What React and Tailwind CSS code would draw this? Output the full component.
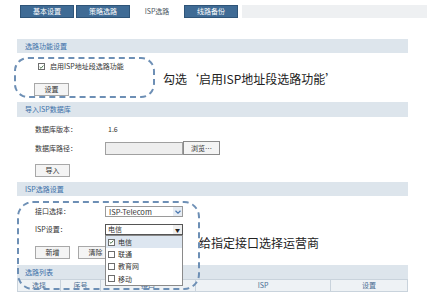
import { useState } from "react";

const font = "font-['Noto_Sans_CJK_SC','Noto_Sans',sans-serif]";

const Tab = ({ label, active }) =>
  active ? (
    <div className="w-[50px] h-[13px] flex items-center justify-center text-[7px] text-[#4a5560]">
      {label}
    </div>
  ) : (
    <div className="w-[54px] h-[13px] flex items-center justify-center text-[7px] text-white bg-[#3f6b95] border border-[#2e5478]">
      {label}
    </div>
  );

const SectionHeader = ({ title, className = "" }) => (
  <div
    className={`h-[14px] w-[391px] bg-[#dde5ec] flex items-center pl-[8px] text-[7px] text-[#3a6fa8] ${className}`}
  >
    {title}
  </div>
);

const Btn = ({ label, className = "" }) => (
  <div
    className={`w-[35px] h-[13px] flex items-center justify-center text-[7px] text-[#333] bg-[#f4f4f4] border border-[#a8a8a8] ${className}`}
  >
    {label}
  </div>
);

const Box = ({ checked }) => (
  <div className="w-[7px] h-[7px] border border-[#6d6d6d] bg-white flex items-center justify-center">
    {checked && (
      <svg width="6" height="6" viewBox="0 0 6 6">
        <path d="M0.8 3 L2.4 4.6 L5.3 1.2" stroke="#2c5d2c" strokeWidth="1" fill="none" />
      </svg>
    )}
  </div>
);

const App = () => {
  const [items] = useState(["电信", "联通", "教育网", "移动"]);

  return (
    <div className={`relative w-[430px] h-[294px] overflow-hidden bg-white ${font}`}>
      {/* tabs */}
      <div className="flex items-center mt-[5px] ml-[20px] gap-[2px]">
        <Tab label="基本设置" />
        <Tab label="策略选路" />
        <Tab label="ISP选路" active />
        <Tab label="线路备份" />
        <div className="ml-[2px] w-[185px] h-[13px] bg-[#eef0f2]" />
      </div>

      <div className="ml-[17px] flex flex-col">
        <SectionHeader title="选路功能设置" className="mt-[21px]" />
        <div className="mt-[9px] h-[9px] ml-[21px] flex items-center gap-[5px] text-[7px] text-[#333]">
          <Box checked />
          <span>启用ISP地址段选路功能</span>
        </div>
        <Btn label="设置" className="mt-[12px] ml-[17px]" />

        <SectionHeader title="导入ISP数据库" className="mt-[6px] h-[15px]" />
        <div className="mt-[7px] h-[10px] ml-[18px] flex items-center text-[7px] text-[#333]">
          <span className="w-[70px]">数据库版本：</span>
          <span className="ml-[3px]">1.6</span>
        </div>
        <div className="mt-[7px] h-[14px] ml-[18px] flex items-center text-[7px] text-[#333]">
          <span className="w-[70px]">数据库路径：</span>
          <div className="w-[78px] h-[13px] bg-[#eeeeee] border border-[#a0a0a0]" />
          <div className="w-[37px] h-[14px] flex items-center justify-center bg-[#f4f4f4] border border-[#8a8a8a]">
            浏览…
          </div>
        </div>
        <Btn label="导入" className="mt-[9px] ml-[18px]" />

        <SectionHeader title="ISP选路设置" className="mt-[5px]" />
        <div className="mt-[10px] h-[11px] ml-[18px] flex items-center text-[7px] text-[#333]">
          <span className="w-[70px]">接口选择：</span>
          <div className="w-[78px] h-[11px] bg-white border border-[#9a9a9a] flex items-center justify-between pl-[3px]">
            <span className="text-[7.5px]">ISP-Telecom</span>
            <span className="w-[9px] h-[9px] bg-[#e6ecf3] flex items-center justify-center">
              <svg width="6" height="4" viewBox="0 0 6 4">
                <path d="M0.5 0.8 L3 3.2 L5.5 0.8" stroke="#4a78b0" strokeWidth="1.2" fill="none" />
              </svg>
            </span>
          </div>
        </div>
        <div className="mt-[7px] h-[11px] ml-[18px] flex items-center text-[7px] text-[#333]">
          <span className="w-[70px]">ISP设置：</span>
          <div className="relative w-[78px] h-[11px] bg-white border border-[#555] flex items-center justify-between pl-[2px]">
            <span>电信</span>
            <span className="w-[9px] h-[9px] bg-[#eeeeee] text-[5px] text-[#222] flex items-center justify-center">
              ▼
            </span>
            <div className="absolute left-[-1px] top-[10px] w-[78px] h-[51px] bg-white border border-[#8a8a8a] flex flex-col z-10">
              {items.map((item, i) => (
                <div
                  key={item}
                  className={`flex-1 flex items-center gap-[3px] pl-[2px] ${i === 0 ? "bg-[#dde6f0]" : ""}`}
                >
                  <Box checked={i === 0} />
                  <span>{item}</span>
                </div>
              ))}
            </div>
          </div>
        </div>
        <div className="mt-[11px] ml-[18px] flex gap-[8px]">
          <Btn label="新增" className="h-[12px]" />
          <Btn label="清除" className="h-[12px]" />
        </div>

        <SectionHeader title="选路列表" className="mt-[6px] h-[13px]" />
        <div className="h-[13px] w-[391px] flex bg-[#eef2f5] border border-[#c9d3dc] text-[7px] text-[#4a6d92]">
          <div className="w-[43px] flex items-center justify-center border-r border-[#c9d3dc]">选择</div>
          <div className="w-[40px] flex items-center justify-center border-r border-[#c9d3dc]">序号</div>
          <div className="w-[95px] flex items-center justify-center border-r border-[#c9d3dc]">接口</div>
          <div className="w-[135px] flex items-center justify-center border-r border-[#c9d3dc]">ISP</div>
          <div className="flex-1 flex items-center justify-center">设置</div>
        </div>
      </div>

      {/* annotations */}
      <div className="absolute left-[14px] top-[57px] w-[141px] h-[41px] rounded-[14px] border-2 border-dashed border-[#6d8fb5]" />
      <div className="absolute left-[163px] top-[70px] text-[12px] text-[#222] whitespace-nowrap">
        勾选‘启用ISP地址段选路功能’
      </div>
      <div className="absolute left-[17px] top-[201px] w-[183px] h-[89px] rounded-[16px] border-2 border-dashed border-[#6d8fb5] z-20" />
      <div className="absolute left-[199px] top-[234px] text-[12px] text-[#222] whitespace-nowrap">
        给指定接口选择运营商
      </div>
    </div>
  );
};

export default App;
